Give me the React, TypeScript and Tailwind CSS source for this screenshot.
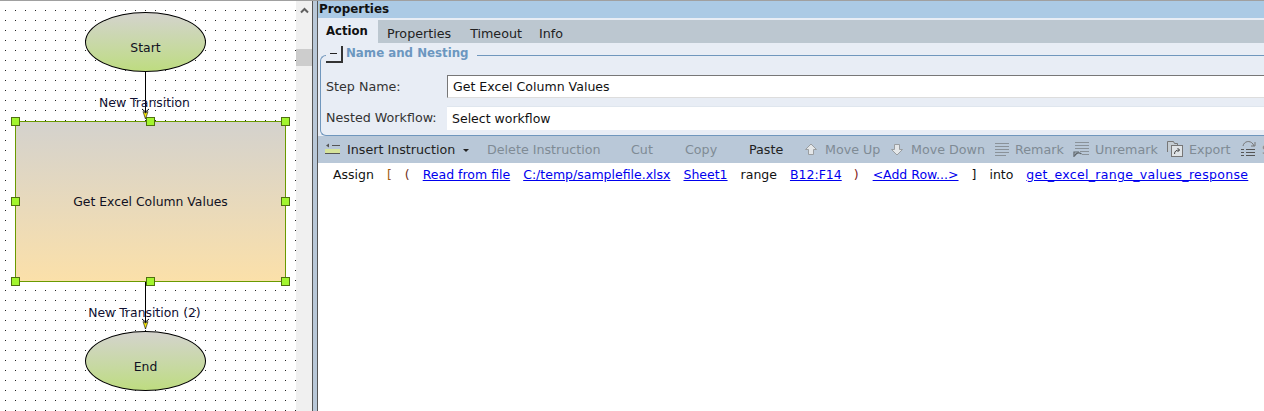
const FONT = "font-['DejaVu_Sans',sans-serif]";

const HANDLES = [
  "left-[11px] top-[116px]",
  "left-[146px] top-[116px]",
  "left-[281px] top-[116px]",
  "left-[11px] top-[196px]",
  "left-[281px] top-[196px]",
  "left-[11px] top-[276px]",
  "left-[146px] top-[276px]",
  "left-[281px] top-[276px]",
];

function Ellipse({ label, className }: { label: string; className: string }) {
  return (
    <div className={`absolute left-[85px] w-[121px] h-[60px] rounded-[50%] border border-black bg-gradient-to-b from-[#d4d3cd] to-[#bedc80] flex items-center justify-center text-[12.4px] text-[#111122] ${className}`}>
      {label}
    </div>
  );
}

function Arrow({ className }: { className: string }) {
  return (
    <svg className={`absolute left-[141px] ${className}`} width="9" height="12" viewBox="0 0 9 12">
      <path d="M1 1l3.5 3L8 1" fill="none" stroke="#000" />
      <path d="M2 3.5L4.5 11L7 3.5L4.5 5z" fill="#ffee00" stroke="#222" strokeWidth="0.7" />
    </svg>
  );
}

function Canvas() {
  return (
    <div className="relative w-[296px] h-full overflow-hidden bg-white">
      <svg className="absolute inset-0" width="296" height="410">
        <defs>
          <pattern id="dots" x="5" y="0" width="10" height="10" patternUnits="userSpaceOnUse">
            <rect x="0" y="9" width="1" height="1" fill="#222" />
          </pattern>
        </defs>
        <rect width="296" height="410" fill="url(#dots)" />
        <path d="M145.5 70V117M145.5 280V328" stroke="#000" strokeWidth="1" />
      </svg>
      <Ellipse label="Start" className="top-[11px] pt-[12px]" />
      <div className="absolute left-[15px] top-[120px] w-[271px] h-[161px] pt-px border border-[#6a9a00] bg-gradient-to-b from-[#d4d2cd] to-[#fbe0a9] flex items-center justify-center text-[12.4px] text-[#111122]">
        Get Excel Column Values
      </div>
      <Ellipse label="End" className="top-[330px] pt-[13px]" />
      <div className="absolute left-0 w-[289px] top-[94px] text-center text-[12.4px] leading-[16px] text-[#111133]">New Transition</div>
      <div className="absolute left-0 w-[289px] top-[304px] text-center text-[12.4px] leading-[16px] text-[#111133]">New Transition (2)</div>
      <Arrow className="top-[107px]" />
      <Arrow className="top-[317px]" />
      {HANDLES.map((pos) => (
        <div key={pos} className={`absolute w-[9px] h-[9px] border border-[#4f6f10] bg-[#a2f52e] ${pos}`} />
      ))}
    </div>
  );
}

function Scrollbar() {
  return (
    <div className="w-[16px] h-full bg-[#f0f0f0] flex flex-col items-center">
      <svg className="mt-[6px]" width="9" height="7" viewBox="0 0 9 7">
        <path d="M1 5.5l3.5-3.5L8 5.5" fill="none" stroke="#606060" strokeWidth="2" />
      </svg>
      <div className="w-full h-[17px] mt-[35px] bg-[#cdcdcd]" />
    </div>
  );
}

function ToolIcon({ kind }: { kind: string }) {
  if (kind === "insert") {
    return (
      <svg className="shrink-0" width="16" height="12" viewBox="0 0 16 12">
        <rect x="0" y="6" width="15" height="4" fill="#d6e39a" />
        <path d="M0 10.5h15M7 2.5h8" stroke="#555" />
        <path d="M4 .5l-3 2 3 2z" fill="#555" />
      </svg>
    );
  }
  if (kind === "up" || kind === "down") {
    return (
      <svg className="shrink-0" width="12" height="13" viewBox="0 0 12 13">
        <path d={kind === "up" ? "M6 1L11.5 6.5H8.5v5h-5v-5H.5z" : "M6 12L11.5 6.5H8.5v-5h-5v5H.5z"} fill="#e4e7e9" stroke="#9a9ea1" />
      </svg>
    );
  }
  if (kind === "remark") {
    return (
      <svg className="shrink-0" width="14" height="14" viewBox="0 0 14 14">
        <path d="M0 1.5h14M0 4.5h14M0 7.5h14M0 10.5h14M0 13.5h11" stroke="#8a9299" />
      </svg>
    );
  }
  if (kind === "unremark") {
    return (
      <svg className="shrink-0" width="16" height="17" viewBox="0 0 16 17">
        <path d="M2 1.5h14M2 4.5h14M2 7.5h14M7 10.5h9M9 13.5h7" stroke="#8a9299" />
        <path d="M1 16V11h5" fill="none" stroke="#5f666b" strokeWidth="1.2" />
        <path d="M1.5 15c1.500-3 4-4 7-2" fill="none" stroke="#5f666b" strokeWidth="1.2" />
      </svg>
    );
  }
  if (kind === "export") {
    return (
      <svg className="shrink-0" width="16" height="16" viewBox="0 0 16 16">
        <path d="M.5 11V.5h6l1 2h3v2" fill="#c4ccd2" stroke="#777" />
        <rect x="4.500" y="4.500" width="11" height="11" fill="#dfe3e6" stroke="#777" />
        <path d="M7.500 13c0-3 2-4 5-4M10.500 7l2 2-2 2" fill="none" stroke="#444" />
      </svg>
    );
  }
  return (
    <svg className="shrink-0" width="16" height="18" viewBox="0 0 16 18">
      <path d="M3 6C4 1 10 0 13 4l1 2M11 6h4V2" fill="none" stroke="#777" />
      <path d="M1 9.500h3M6 9.500h9M1 12.500h3M6 12.500h9M1 15.500h3M6 15.500h9" stroke="#555" />
    </svg>
  );
}

function ToolButton({ icon, label, dark, className }: { icon?: string; label: string; dark?: boolean; className: string }) {
  return (
    <div className={`flex items-center shrink-0 ${dark ? "text-[#222]" : "text-[#7f8b95]"} ${className}`}>
      {icon && <ToolIcon kind={icon} />}
      <span>{label}</span>
    </div>
  );
}

function Toolbar() {
  return (
    <div className="h-[27px] bg-[#b9c8d8] flex items-center overflow-hidden text-[12.7px] whitespace-nowrap">
      <ToolButton icon="insert" label="Insert Instruction" dark className="ml-[7px] w-[138px] gap-[6px]" />
      <svg className="mt-[2px] shrink-0" width="7" height="4" viewBox="0 0 7 4"><path d="M0 0h6L3 3z" fill="#222" /></svg>
      <ToolButton label="Delete Instruction" className="ml-[17px] w-[144px]" />
      <ToolButton label="Cut" className="w-[54px]" />
      <ToolButton label="Copy" className="w-[64px]" />
      <ToolButton label="Paste" dark className="w-[56px]" />
      <ToolButton icon="up" label="Move Up" className="w-[86px] gap-[8px]" />
      <ToolButton icon="down" label="Move Down" className="w-[104px] gap-[8px]" />
      <ToolButton icon="remark" label="Remark" className="w-[78px] gap-[6px]" />
      <ToolButton icon="unremark" label="Unremark" className="w-[94px] gap-[6px]" />
      <ToolButton icon="export" label="Export" className="w-[73px] gap-[6px]" />
      <ToolButton icon="other" label="S" className="w-[32px] gap-[6px]" />
    </div>
  );
}

function Link({ children, className }: { children: string; className?: string }) {
  return <a className={`text-[#0000ee] underline ${className ?? ""}`}>{children}</a>;
}

function InstructionRow() {
  return (
    <div className="flex-1 bg-white pl-[15px] pt-[4px] flex gap-[13px] text-[12.5px] leading-[16px] text-[#111] whitespace-nowrap">
      <span>Assign</span>
      <span className="text-[#a05a10]">[</span>
      <span className="text-[#703020]">(</span>
      <Link>Read from file</Link>
      <Link>C:/temp/samplefile.xlsx</Link>
      <Link>Sheet1</Link>
      <span>range</span>
      <Link>B12:F14</Link>
      <span className="text-[#802020] -ml-px mr-px">)</span>
      <Link>{"<Add Row...>"}</Link>
      <span>]</span>
      <span>into</span>
      <Link className="tracking-[0.32px]">get_excel_range_values_response</Link>
    </div>
  );
}

function NamePanel() {
  return (
    <div className="relative h-[93px] bg-[#e8edf5]">
      <div className="absolute left-[2px] right-0 top-[12px] h-[81px] border-t border-l border-b border-[#7097bd] rounded-l-[6px] pl-[5px] pt-[19px] flex flex-col gap-[8px] text-[12.7px]">
        <div className="flex items-center">
          <span className="w-[121px] text-[#333]">Step Name:</span>
          <div className="flex-1 h-[23px] bg-white flex items-center pl-[5px] pt-[2px] text-[12.55px] text-[#111] border-t border-l border-b border-t-[#777] border-l-[#777] border-b-[#ddd]">
            Get Excel Column Values
          </div>
        </div>
        <div className="flex items-center">
          <span className="w-[121px] text-[#333]">Nested Workflow:</span>
          <div className="flex-1 h-[24px] bg-white flex items-center pl-[5px] pt-px text-[12.5px] text-[#111] border-t border-[#dfe6ee]">
            Select workflow
          </div>
        </div>
      </div>
      <div className="absolute left-[8px] top-[3px] flex items-center bg-[#e8edf5] pr-[8px]">
        <div className="w-[17px] h-[17px] bg-[#e8edf5] border-r-2 border-b-2 border-[#333] flex items-center justify-center">
          <span className="w-[7px] h-px bg-[#222]" />
        </div>
        <span className="ml-[3px] -mt-[2px] text-[11.8px] font-bold text-[#6c97c0]">Name and Nesting</span>
      </div>
    </div>
  );
}

export default function App() {
  return (
    <div className={`w-[1264px] h-[411px] flex flex-col overflow-hidden bg-white ${FONT}`}>
      <div className="h-px bg-[#a0a0a0]" />
      <div className="flex-1 min-h-0 flex">
        <Canvas />
        <Scrollbar />
        <div className="w-[6px] h-full border-x border-[#555] bg-[#b9c8d8]" />
        <div className="flex-1 min-w-0 flex flex-col">
          <div className="h-[17px] pl-px bg-[#abcae5] flex items-center text-[11.9px] font-bold text-[#111]">Properties</div>
          <div className="h-[2px] bg-[#e8edf5]" />
          <div className="h-[23px] bg-[#bcc7d0] flex items-stretch text-[12.7px] text-[#222]">
            <div className="w-[60px] bg-[#e8edf5] pl-[8px] pt-[2px] text-[11.7px] leading-[18px] font-bold text-[#111]">Action</div>
            <div className="ml-[9px] pt-[4px]">Properties</div>
            <div className="ml-[19px] pt-[4px]">Timeout</div>
            <div className="ml-[17px] pt-[4px]">Info</div>
          </div>
          <NamePanel />
          <Toolbar />
          <InstructionRow />
        </div>
      </div>
    </div>
  );
}
